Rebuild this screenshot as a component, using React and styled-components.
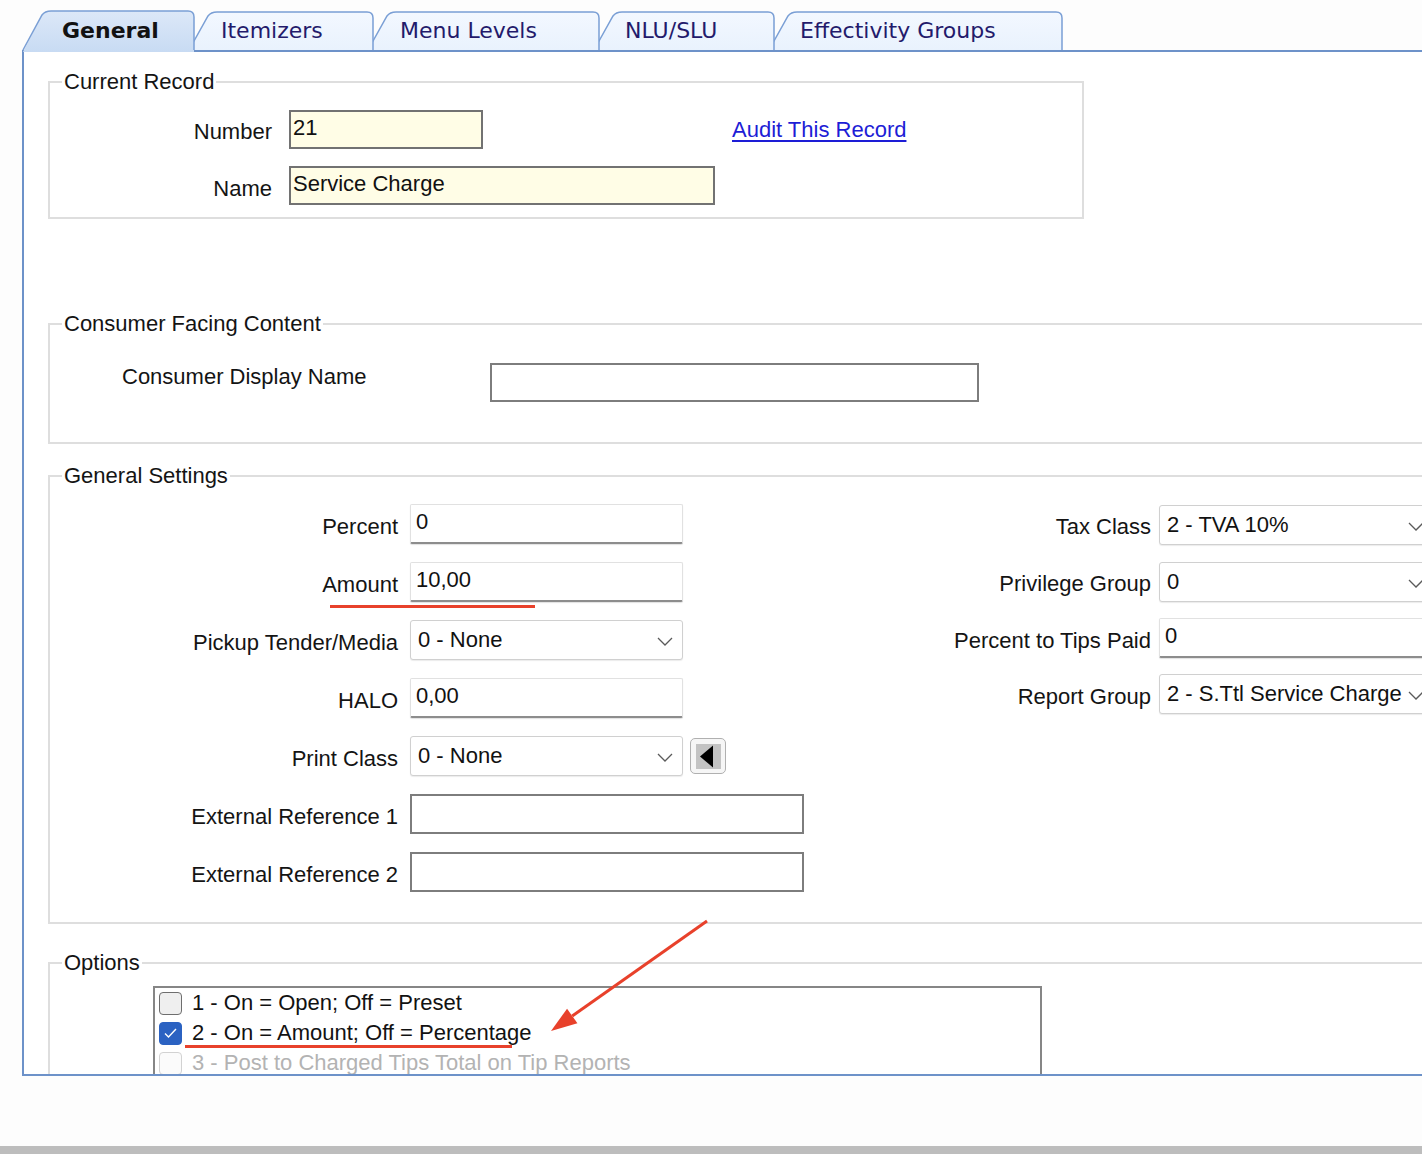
import React from 'react';
import styled, { createGlobalStyle, css } from 'styled-components';

const Global = createGlobalStyle`
  html, body { margin: 0; padding: 0; background: #fdfdfd; overflow: hidden; }
  body { font-family: "Liberation Sans", Arial, sans-serif; }
`;

const Page = styled.div`
  position: relative;
  height: 1154px;
  display: flex;
  flex-direction: column;
  overflow: hidden;
  background: #fdfdfd;
`;

/* ---------- Tabs ---------- */
const TabStrip = styled.div`
  display: flex;
  align-items: flex-start;
  height: 42px;
  margin: 10px 0 -2px 22px;
  position: relative;
  z-index: 2;
`;

const TabItem = styled.div`
  position: relative;
  flex: none;
  width: ${p => p.$w}px;
  height: ${p => (p.$active ? 42 : 39)}px;
  margin-top: ${p => (p.$active ? 0 : 1)}px;
  margin-left: ${p => (p.$first ? 0 : -7)}px;
  z-index: ${p => p.$z};
`;

const TabShape = styled.svg`
  position: absolute;
  left: 0;
  top: 0;
  overflow: visible;
`;

const TabLabel = styled.span`
  position: relative;
  display: block;
  padding: ${p => (p.$active ? 8 : 7)}px 0 0 ${p => p.$pad}px;
  font-family: "DejaVu Sans", Verdana, sans-serif;
  font-size: 22px;
  line-height: 26px;
  font-weight: ${p => (p.$active ? 700 : 400)};
  color: ${p => (p.$active ? '#121212' : '#231a6b')};
  white-space: nowrap;
`;

function Tab({ w, pad, label, active, first, z }) {
  const H = active ? 42 : 39;
  const S = 24;
  const stroke = `M1 ${active ? 40 : H} L${S - 4} 5 Q${S - 1} 1 ${S + 5} 1 L${w - 7} 1 Q${w - 1} 1 ${w - 1} 7 L${w - 1} ${active ? 40 : H}`;
  const fill = `M1 ${H} L${S - 4} 5 Q${S - 1} 1 ${S + 5} 1 L${w - 7} 1 Q${w - 1} 1 ${w - 1} 7 L${w - 1} ${H} Z`;
  const gid = `g-${label.replace(/[^a-z]/gi, '')}`;
  return (
    <TabItem $w={w} $active={active} $first={first} $z={z}>
      <TabShape width={w} height={H} viewBox={`0 0 ${w} ${H}`}>
        <defs>
          <linearGradient id={gid} x1="0" y1="0" x2="0" y2="1">
            <stop offset="0" stopColor={active ? '#dce8f8' : '#f3f8ff'} />
            <stop offset="1" stopColor={active ? '#c8dbf3' : '#e9f2fd'} />
          </linearGradient>
        </defs>
        <path d={fill} fill={`url(#${gid})`} />
        <path d={stroke} fill="none" stroke="#7a9fd5" strokeWidth="1.5" />
      </TabShape>
      <TabLabel $active={active} $pad={pad}>{label}</TabLabel>
    </TabItem>
  );
}

/* ---------- Panel & groups ---------- */
const Panel = styled.div`
  flex: none;
  height: 1026px;
  margin-left: 22px;
  box-sizing: border-box;
  border-top: 2px solid #6d92c9;
  border-left: 2px solid #6d92c9;
  border-bottom: 2px solid #6d92c9;
  background: #fff;
  overflow: hidden;
  display: flex;
  flex-direction: column;
  align-items: flex-start;
  padding-left: 24px;
`;

const Group = styled.fieldset`
  flex: none;
  box-sizing: border-box;
  width: ${p => p.$w}px;
  min-width: 0;
  margin: ${p => p.$mt}px 0 0 0;
  padding: ${p => p.$pt}px 0 ${p => p.$pb}px 0;
  border: 2px solid #dedede;
`;

const Legend = styled.legend`
  margin-left: 12px;
  padding: 0 2px;
  font-size: 22px;
  line-height: 26px;
  color: #141414;
`;

const Stack = styled.div`
  display: flex;
  flex-direction: column;
  gap: ${p => p.$gap}px;
`;

const Columns = styled.div`
  display: flex;
  gap: 97px;
`;

const Row = styled.div`
  position: relative;
  display: flex;
  align-items: ${p => p.$align || 'center'};
  height: ${p => p.$h || 40}px;
`;

const Label = styled.div`
  flex: none;
  box-sizing: border-box;
  width: ${p => p.$w}px;
  margin-left: ${p => p.$ml || 0}px;
  margin-right: ${p => p.$gap}px;
  margin-top: ${p => p.$mtop || 0}px;
  text-align: ${p => (p.$left ? 'left' : 'right')};
  font-size: 22px;
  line-height: 26px;
  color: #141414;
  white-space: nowrap;
`;

const SettingLabel = styled(Label)`
  margin-top: 5px;
`;

const kinds = {
  yellow: css`
    background: #fffde6;
    border: 2px solid #727272;
    padding-left: 2px;
  `,
  box: css`
    background: #fff;
    border: 2px solid #7d7d7d;
    padding-left: 4px;
  `,
  num: css`
    background: #fff;
    border: 1px solid #e1e1e1;
    border-bottom: 2px solid #8d8d8d;
    border-radius: 2px;
    box-shadow: 0 1px 1px rgba(0, 0, 0, 0.12);
    padding-left: 5px;
  `,
  combo: css`
    background: #fff;
    border: 1px solid #d0d0d0;
    border-radius: 3px;
    box-shadow: 0 1px 1px rgba(0, 0, 0, 0.08);
    padding: 0 9px 0 7px;
    justify-content: space-between;
  `,
};

const Field = styled.div`
  flex: none;
  box-sizing: border-box;
  width: ${p => p.$w}px;
  height: ${p => p.$h || 40}px;
  display: flex;
  align-items: center;
  padding-bottom: 3px;
  font-size: 22px;
  line-height: 26px;
  color: #111;
  white-space: nowrap;
  overflow: hidden;
  ${p => kinds[p.$kind]}
`;

const Chevron = () => (
  <svg width="16" height="9" viewBox="0 0 16 9" style={{ flex: 'none', marginTop: 3 }}>
    <polyline points="1,1 8,8 15,1" fill="none" stroke="#5a5a5a" strokeWidth="1.3" />
  </svg>
);

function Combo({ w, value }) {
  return (
    <Field $kind="combo" $w={w}>
      <span>{value}</span>
      <Chevron />
    </Field>
  );
}

const SideButton = styled.div`
  flex: none;
  box-sizing: border-box;
  width: 36px;
  height: 36px;
  margin-left: 7px;
  border: 1px solid #b0b0b0;
  border-radius: 5px;
  background: #f6f6f6;
  display: flex;
  align-items: center;
  justify-content: center;
`;

const AuditLink = styled.a`
  margin-left: 249px;
  font-size: 22px;
  line-height: 26px;
  color: #1d1dd6;
  text-decoration: underline;
  text-underline-offset: 3px;
  white-space: nowrap;
`;

const RedMark = styled.div`
  position: absolute;
  left: ${p => p.$l}px;
  top: ${p => p.$t}px;
  width: ${p => p.$w}px;
  height: 3px;
  background: #e8412b;
`;

/* ---------- Options list ---------- */
const CheckList = styled.div`
  box-sizing: border-box;
  width: 889px;
  height: 220px;
  margin-left: 103px;
  border: 2px solid #868686;
  background: #fff;
`;

const CheckRow = styled.div`
  position: relative;
  display: flex;
  align-items: center;
  height: 30px;
  padding-left: 4px;
  gap: 10px;
  font-size: 22px;
  line-height: 26px;
  color: ${p => (p.$disabled ? '#b3b3b3' : '#121212')};
  white-space: nowrap;
`;

const Box = styled.span`
  flex: none;
  box-sizing: border-box;
  width: 23px;
  height: 23px;
  border-radius: 4px;
  display: flex;
  align-items: center;
  justify-content: center;
  border: 1.5px solid ${p => (p.$checked ? '#2b62c2' : p.$disabled ? '#d2d2d2' : '#6e6e6e')};
  background: ${p => (p.$checked ? '#2b62c2' : p.$disabled ? '#fbfbfb' : '#efefef')};
`;

const Spacer = styled.div`
  flex: 1;
`;

const BottomBar = styled.div`
  flex: none;
  height: 8px;
  background: #bdbdbd;
`;

const Overlay = styled.svg`
  position: absolute;
  left: 0;
  top: 0;
  pointer-events: none;
`;

const tabs = [
  { label: 'General', w: 173, pad: 40, active: true },
  { label: 'Itemizers', w: 186, pad: 33 },
  { label: 'Menu Levels', w: 233, pad: 33 },
  { label: 'NLU/SLU', w: 182, pad: 32 },
  { label: 'Effectivity Groups', w: 295, pad: 32 },
];

export default function App() {
  const tip = [551, 1031];
  const start = [707, 921];
  const dx = tip[0] - start[0];
  const dy = tip[1] - start[1];
  const len = Math.hypot(dx, dy);
  const ux = dx / len;
  const uy = dy / len;
  const hl = 26;
  const hw = 9;
  const bx = tip[0] - ux * hl;
  const by = tip[1] - uy * hl;
  const px = -uy * hw;
  const py = ux * hw;

  return (
    <Page>
      <Global />
      <TabStrip>
        {tabs.map((t, i) => (
          <Tab
            key={t.label}
            label={t.label}
            w={t.w}
            pad={t.pad}
            active={t.active}
            first={i === 0}
            z={t.active ? 10 : 6 - i}
          />
        ))}
      </TabStrip>

      <Panel>
        <Group $w={1036} $mt={17} $pt={15} $pb={12}>
          <Legend>Current Record</Legend>
          <Stack $gap={17}>
            <Row $h={39}>
              <Label $w={222} $gap={17} $mtop={4}>Number</Label>
              <Field $kind="yellow" $w={194} $h={39}>21</Field>
              <AuditLink>Audit This Record</AuditLink>
            </Row>
            <Row $h={39}>
              <Label $w={222} $gap={17} $mtop={6}>Name</Label>
              <Field $kind="yellow" $w={426} $h={39}>Service Charge</Field>
            </Row>
          </Stack>
        </Group>

        <Group $w={1500} $mt={92} $pt={26} $pb={40}>
          <Legend>Consumer Facing Content</Legend>
          <Row $h={39} $align="flex-start">
            <Label $left $w={368} $ml={72} $gap={0} $mtop={1}>Consumer Display Name</Label>
            <Field $kind="box" $w={489} $h={39} />
          </Row>
        </Group>

        <Group $w={1500} $mt={19} $pt={15} $pb={30}>
          <Legend>General Settings</Legend>
          <Columns>
            <Stack $gap={18}>
              <Row>
                <SettingLabel $w={348} $gap={12}>Percent</SettingLabel>
                <Field $kind="num" $w={273}>0</Field>
              </Row>
              <Row>
                <SettingLabel $w={348} $gap={12}>Amount</SettingLabel>
                <Field $kind="num" $w={273}>10,00</Field>
                <RedMark $l={280} $t={43} $w={205} />
              </Row>
              <Row>
                <SettingLabel $w={348} $gap={12}>Pickup Tender/Media</SettingLabel>
                <Combo w={273} value="0 - None" />
              </Row>
              <Row>
                <SettingLabel $w={348} $gap={12}>HALO</SettingLabel>
                <Field $kind="num" $w={273}>0,00</Field>
              </Row>
              <Row>
                <SettingLabel $w={348} $gap={12}>Print Class</SettingLabel>
                <Combo w={273} value="0 - None" />
                <SideButton>
                  <svg width="25" height="25" viewBox="0 0 25 25">
                    <rect x="0" y="0" width="25" height="25" fill="#c3c3c3" />
                    <polygon points="4,12.5 17,1.5 17,23.5" fill="#000" />
                  </svg>
                </SideButton>
              </Row>
              <Row>
                <SettingLabel $w={348} $gap={12}>External Reference 1</SettingLabel>
                <Field $kind="box" $w={394} />
              </Row>
              <Row>
                <SettingLabel $w={348} $gap={12}>External Reference 2</SettingLabel>
                <Field $kind="box" $w={394} />
              </Row>
            </Stack>

            <Stack $gap={16}>
              <Row $h={41}>
                <SettingLabel $w={250} $gap={8}>Tax Class</SettingLabel>
                <Combo w={275} value="2 - TVA 10%" />
              </Row>
              <Row $h={41}>
                <SettingLabel $w={250} $gap={8}>Privilege Group</SettingLabel>
                <Combo w={275} value="0" />
              </Row>
              <Row>
                <SettingLabel $w={250} $gap={8}>Percent to Tips Paid</SettingLabel>
                <Field $kind="num" $w={275}>0</Field>
              </Row>
              <Row>
                <SettingLabel $w={250} $gap={8}>Report Group</SettingLabel>
                <Combo w={275} value="2 - S.Ttl Service Charge" />
              </Row>
            </Stack>
          </Columns>
        </Group>

        <Group $w={1500} $mt={26} $pt={10} $pb={10}>
          <Legend>Options</Legend>
          <CheckList>
            <CheckRow>
              <Box />
              <span>1 - On = Open; Off = Preset</span>
            </CheckRow>
            <CheckRow>
              <Box $checked>
                <svg width="15" height="12" viewBox="0 0 15 12">
                  <polyline points="2,6.5 5.5,10 13,2" fill="none" stroke="#fff" strokeWidth="1.4" />
                </svg>
              </Box>
              <span>2 - On = Amount; Off = Percentage</span>
              <RedMark $l={30} $t={27} $w={327} />
            </CheckRow>
            <CheckRow $disabled>
              <Box $disabled />
              <span>3 - Post to Charged Tips Total on Tip Reports</span>
            </CheckRow>
          </CheckList>
        </Group>
      </Panel>

      <Spacer />
      <BottomBar />

      <Overlay width="1422" height="1154" viewBox="0 0 1422 1154">
        <line x1={start[0]} y1={start[1]} x2={bx} y2={by} stroke="#e8412b" strokeWidth="3" />
        <polygon
          points={`${tip[0]},${tip[1]} ${bx + px},${by + py} ${bx - px},${by - py}`}
          fill="#e8412b"
        />
      </Overlay>
    </Page>
  );
}
